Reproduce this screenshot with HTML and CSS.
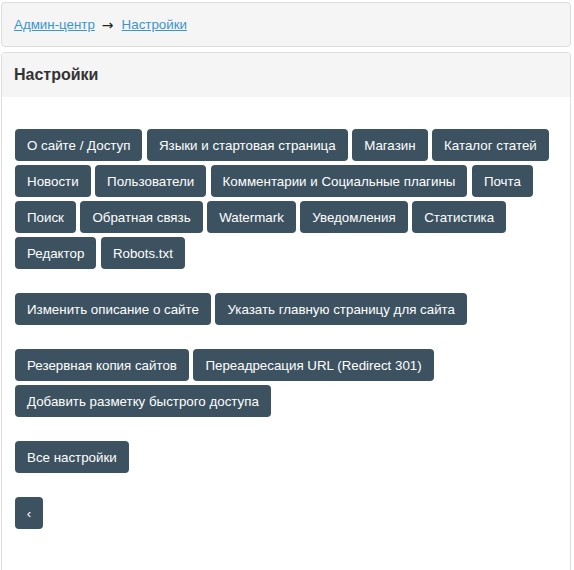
FILE: index.html
```html
<!DOCTYPE html>
<html lang="ru">
<head>
<meta charset="utf-8">
<title>Настройки</title>
<link rel="stylesheet" href="styles.css">
</head>
<body>
<div class="page">
  <nav class="crumbs">
    <a href="#">Админ-центр</a><span class="arrow">→</span><a href="#">Настройки</a>
  </nav>
  <section class="panel">
    <div class="panel-head">Настройки</div>
    <div class="panel-body">
      <div class="group">
        <a class="btn" href="#">О сайте / Доступ</a>
        <a class="btn" href="#">Языки и стартовая страница</a>
        <a class="btn" href="#">Магазин</a>
        <a class="btn" href="#">Каталог статей</a>
        <a class="btn" href="#">Новости</a>
        <a class="btn" href="#">Пользователи</a>
        <a class="btn" href="#">Комментарии и Социальные плагины</a>
        <a class="btn" href="#">Почта</a>
        <a class="btn" href="#">Поиск</a>
        <a class="btn" href="#">Обратная связь</a>
        <a class="btn" href="#">Watermark</a>
        <a class="btn" href="#">Уведомления</a>
        <a class="btn" href="#">Статистика</a>
        <a class="btn" href="#">Редактор</a>
        <a class="btn" href="#">Robots.txt</a>
      </div>
      <div class="group">
        <a class="btn" href="#">Изменить описание о сайте</a>
        <a class="btn" href="#">Указать главную страницу для сайта</a>
      </div>
      <div class="group">
        <a class="btn" href="#">Резервная копия сайтов</a>
        <a class="btn" href="#">Переадресация URL (Redirect 301)</a>
        <a class="btn" href="#">Добавить разметку быстрого доступа</a>
      </div>
      <div class="group">
        <a class="btn" href="#">Все настройки</a>
      </div>
      <div class="group">
        <a class="btn btn-back" href="#">‹</a>
      </div>
    </div>
  </section>
</div>
</body>
</html>
```
FILE: styles.css
```css
html, body {
  margin: 0;
  padding: 0;
  background: #fff;
  font-family: "Liberation Sans", Arial, sans-serif;
  font-size: 13.33px;
  color: #333;
}
.page {
  padding: 2px 3px 0 1px;
}
.crumbs {
  height: 43px;
  display: flex;
  align-items: center;
  padding: 0 12px;
  background: #f5f5f5;
  border: 1px solid #ddd;
  border-radius: 4px;
}
.crumbs a {
  color: #3a95cc;
  text-decoration: underline;
}
.arrow {
  margin: 0 8px 0 7px;
  color: #222;
  font-family: "DejaVu Sans", sans-serif;
  font-size: 14px;
}
.panel {
  margin-top: 5px;
  border: 1px solid #ddd;
  border-bottom: none;
  border-radius: 4px 4px 0 0;
  min-height: 530px;
}
.panel-head {
  height: 44px;
  display: flex;
  align-items: center;
  padding: 0 12px;
  background: #f5f5f5;
  font-size: 16px;
  font-weight: bold;
  color: #333;
}
.panel-body {
  padding: 32px 13px 0;
}
.group {
  display: flex;
  flex-wrap: wrap;
  gap: 4px 4.5px;
  margin-bottom: 24px;
}
.btn {
  display: inline-flex;
  align-items: center;
  height: 32px;
  box-sizing: border-box;
  padding: 0 12px;
  background: #3c5261;
  color: #fff;
  border-radius: 4px;
  text-decoration: none;
  font-size: 13.33px;
  white-space: nowrap;
}
.btn-back {
  width: 28px;
  justify-content: center;
  padding: 0;
}
```
